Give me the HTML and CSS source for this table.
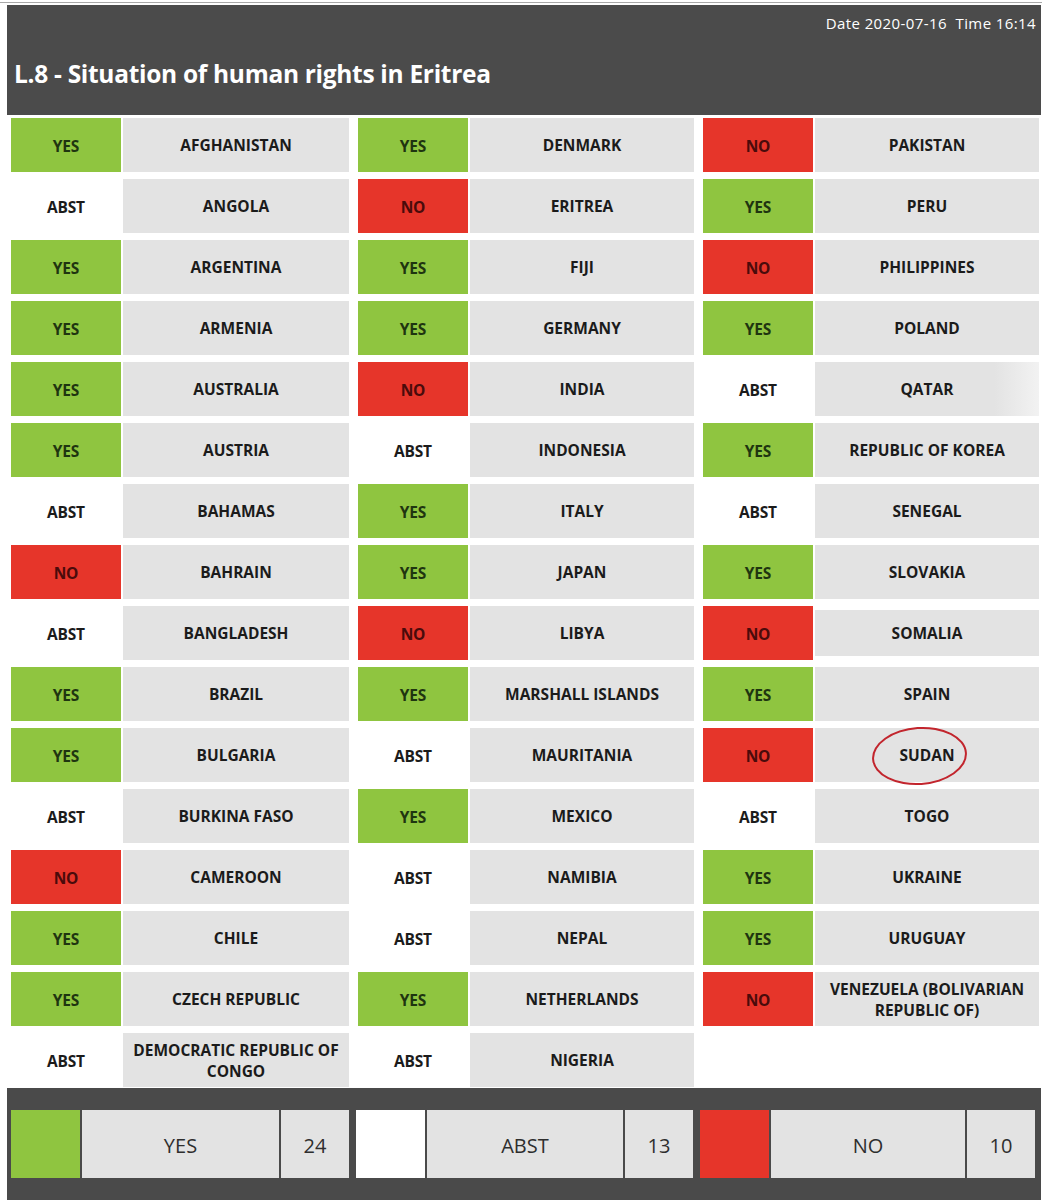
FILE: index.html
```html
<!DOCTYPE html>
<html>
<head>
<meta charset="utf-8">
<link rel="stylesheet" href="styles.css">
</head>
<body>
<div class="topline"></div>
<header class="header">
  <div class="stamp">Date 2020-07-16&nbsp; Time 16:14</div>
  <h1 class="title">L.8 - Situation of human rights in Eritrea</h1>
</header>
<main class="grid">
  <div class="pair"><div class="vote yes">YES</div><div class="name">AFGHANISTAN</div></div>
  <div class="pair"><div class="vote abst">ABST</div><div class="name">ANGOLA</div></div>
  <div class="pair"><div class="vote yes">YES</div><div class="name">ARGENTINA</div></div>
  <div class="pair"><div class="vote yes">YES</div><div class="name">ARMENIA</div></div>
  <div class="pair"><div class="vote yes">YES</div><div class="name">AUSTRALIA</div></div>
  <div class="pair"><div class="vote yes">YES</div><div class="name">AUSTRIA</div></div>
  <div class="pair"><div class="vote abst">ABST</div><div class="name">BAHAMAS</div></div>
  <div class="pair"><div class="vote no">NO</div><div class="name">BAHRAIN</div></div>
  <div class="pair"><div class="vote abst">ABST</div><div class="name">BANGLADESH</div></div>
  <div class="pair"><div class="vote yes">YES</div><div class="name">BRAZIL</div></div>
  <div class="pair"><div class="vote yes">YES</div><div class="name">BULGARIA</div></div>
  <div class="pair"><div class="vote abst">ABST</div><div class="name">BURKINA FASO</div></div>
  <div class="pair"><div class="vote no">NO</div><div class="name">CAMEROON</div></div>
  <div class="pair"><div class="vote yes">YES</div><div class="name">CHILE</div></div>
  <div class="pair"><div class="vote yes">YES</div><div class="name">CZECH REPUBLIC</div></div>
  <div class="pair"><div class="vote abst">ABST</div><div class="name">DEMOCRATIC REPUBLIC OF CONGO</div></div>

  <div class="pair"><div class="vote yes">YES</div><div class="name">DENMARK</div></div>
  <div class="pair"><div class="vote no">NO</div><div class="name">ERITREA</div></div>
  <div class="pair"><div class="vote yes">YES</div><div class="name">FIJI</div></div>
  <div class="pair"><div class="vote yes">YES</div><div class="name">GERMANY</div></div>
  <div class="pair"><div class="vote no">NO</div><div class="name">INDIA</div></div>
  <div class="pair"><div class="vote abst">ABST</div><div class="name">INDONESIA</div></div>
  <div class="pair"><div class="vote yes">YES</div><div class="name">ITALY</div></div>
  <div class="pair"><div class="vote yes">YES</div><div class="name">JAPAN</div></div>
  <div class="pair"><div class="vote no">NO</div><div class="name">LIBYA</div></div>
  <div class="pair"><div class="vote yes">YES</div><div class="name">MARSHALL ISLANDS</div></div>
  <div class="pair"><div class="vote abst">ABST</div><div class="name">MAURITANIA</div></div>
  <div class="pair"><div class="vote yes">YES</div><div class="name">MEXICO</div></div>
  <div class="pair"><div class="vote abst">ABST</div><div class="name">NAMIBIA</div></div>
  <div class="pair"><div class="vote abst">ABST</div><div class="name">NEPAL</div></div>
  <div class="pair"><div class="vote yes">YES</div><div class="name">NETHERLANDS</div></div>
  <div class="pair"><div class="vote abst">ABST</div><div class="name">NIGERIA</div></div>

  <div class="pair"><div class="vote no">NO</div><div class="name">PAKISTAN</div></div>
  <div class="pair"><div class="vote yes">YES</div><div class="name">PERU</div></div>
  <div class="pair"><div class="vote no">NO</div><div class="name">PHILIPPINES</div></div>
  <div class="pair"><div class="vote yes">YES</div><div class="name">POLAND</div></div>
  <div class="pair"><div class="vote abst">ABST</div><div class="name faded">QATAR</div></div>
  <div class="pair"><div class="vote yes">YES</div><div class="name">REPUBLIC OF KOREA</div></div>
  <div class="pair"><div class="vote abst">ABST</div><div class="name">SENEGAL</div></div>
  <div class="pair"><div class="vote yes">YES</div><div class="name">SLOVAKIA</div></div>
  <div class="pair"><div class="vote no">NO</div><div class="name patched">SOMALIA</div></div>
  <div class="pair"><div class="vote yes">YES</div><div class="name">SPAIN</div></div>
  <div class="pair"><div class="vote no">NO</div><div class="name circled"><span>SUDAN</span></div></div>
  <div class="pair"><div class="vote abst">ABST</div><div class="name">TOGO</div></div>
  <div class="pair"><div class="vote yes">YES</div><div class="name">UKRAINE</div></div>
  <div class="pair"><div class="vote yes">YES</div><div class="name">URUGUAY</div></div>
  <div class="pair"><div class="vote no">NO</div><div class="name">VENEZUELA (BOLIVARIAN REPUBLIC OF)</div></div>
  <div class="pair empty"></div>
</main>
<footer class="footer">
  <div class="total"><div class="swatch s-yes"></div><div class="label">YES</div><div class="count">24</div></div>
  <div class="total"><div class="swatch s-abst"></div><div class="label">ABST</div><div class="count">13</div></div>
  <div class="total"><div class="swatch s-no"></div><div class="label">NO</div><div class="count">10</div></div>
</footer>
</body>
</html>
```

FILE: styles.css
```css
* { box-sizing: border-box; }

html, body {
  margin: 0;
  padding: 0;
  background: #ffffff;
}

body {
  width: 1047px;
  height: 1200px;
  overflow: hidden;
  font-family: "Open Sans", "Noto Sans", sans-serif;
  color: #1b1b1b;
}

.topline {
  height: 1px;
  width: 1042px;
  margin-top: 2px;
  background: #a9a9a9;
}

.header {
  margin: 2px 6px 0 7px;
  height: 110px;
  background: #4b4b4b;
  color: #ffffff;
  padding: 8px 5px 0 7px;
  display: flex;
  flex-direction: column;
}

.stamp {
  align-self: flex-end;
  font-size: 15px;
  line-height: 20px;
  letter-spacing: 0.4px;
}

.title {
  margin: 26px 0 0 0;
  font-size: 24.5px;
  font-weight: 700;
  line-height: 30px;
  letter-spacing: -0.3px;
}

.grid {
  margin: 3px 0 0 11px;
  display: grid;
  grid-template-columns: 338px 336px 336px;
  grid-template-rows: repeat(16, 54px);
  grid-auto-flow: column;
  column-gap: 9px;
  row-gap: 7px;
}

.pair {
  display: flex;
  gap: 2px;
}

.vote {
  width: 110px;
  flex: none;
  display: flex;
  align-items: center;
  justify-content: center;
  font-size: 15.5px;
  font-weight: 700;
  letter-spacing: -0.2px;
  padding-top: 1px;
}

.vote.yes { background: #8fc540; color: #1f3510; }
.vote.no { background: #e6352a; color: #4a0b0b; }
.vote.abst { background: #ffffff; color: #1b1b1b; }

.name {
  flex: 1;
  background: #e3e3e3;
  display: flex;
  align-items: center;
  justify-content: center;
  text-align: center;
  font-size: 15.5px;
  font-weight: 700;
  line-height: 21px;
  letter-spacing: 0;
  padding: 1px 5px 0;
  position: relative;
}

.name.faded {
  background: linear-gradient(90deg, #e3e3e3 80%, #f2f2f2 100%);
}

.name.patched {
  background: linear-gradient(180deg, #ffffff 0, #ffffff 4px, #e3e3e3 4px, #e3e3e3 50px, #ffffff 50px);
}

.name.circled::after {
  content: "";
  position: absolute;
  left: 57px;
  top: -1px;
  width: 91px;
  height: 54px;
  border: 2px solid #c2252d;
  border-radius: 50%;
  transform: rotate(-4deg);
}

.pair.empty { background: #ffffff; }

.footer {
  margin: 1px 6px 0 7px;
  height: 120px;
  background: #4a4a4a;
  padding: 22px 0 0 4px;
  display: grid;
  grid-template-columns: 338px 337px 335px;
  grid-template-rows: 68px;
  column-gap: 7px;
}

.total {
  display: flex;
  gap: 2px;
}

.swatch {
  width: 69px;
  flex: none;
}

.s-yes { background: #8fc540; }
.s-abst { background: #ffffff; }
.s-no { background: #e6352a; }

.label {
  flex: 1;
  background: #e3e3e3;
  display: flex;
  align-items: center;
  justify-content: center;
  font-size: 20px;
  padding-top: 3px;
  color: #2e2e2e;
}

.count {
  width: 68px;
  flex: none;
  background: #e3e3e3;
  display: flex;
  align-items: center;
  justify-content: center;
  font-size: 20px;
  padding-top: 3px;
  color: #2e2e2e;
}
```
